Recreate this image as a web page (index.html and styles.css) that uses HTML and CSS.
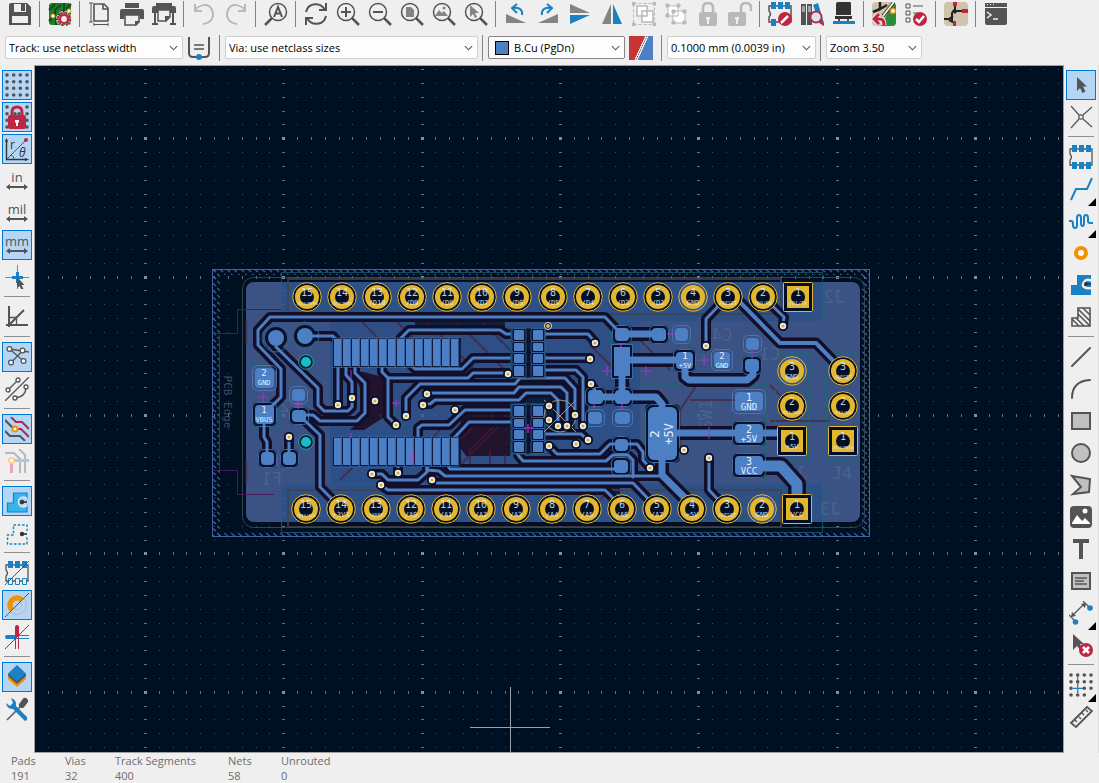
FILE: index.html
```html
<!DOCTYPE html>
<html lang="en">
<head>
<meta charset="utf-8">
<title>PCB Editor</title>
<link rel="stylesheet" href="styles.css">
</head>
<body>
<div class="app">
<header class="top">
<div class="bar" role="toolbar" aria-label="Main">
<button aria-label="Save"><svg viewBox="0 0 24 24"><path fill="#545454" d="M3 1h16l4 4v18H1V3q0-2 2-2z"/><path fill="#efefef" d="M6 2h12v8H6zM4 14h16v7H4z"/><path fill="#545454" d="M13 2h4v7h-4z"/></svg></button>
<i class="sep"></i>
<button aria-label="Board setup"><svg viewBox="0 0 24 24"><rect x="1" y="1" width="22" height="22" rx="3" fill="#1f7a2c"/><path fill="none" stroke="#0c4d18" stroke-width="2" d="M1 8l6-6M1 19l6-6V8l6-5M8 23v-7l8-8V1M18 7l5-5"/><circle cx="5" cy="14" r="2" fill="#fff" stroke="#f39200"/><circle cx="21" cy="9" r="2" fill="#fff" stroke="#f39200"/><circle cx="16" cy="17" r="6" fill="none" stroke="#efefef" stroke-width="4" stroke-dasharray="3.2 1.5"/><circle cx="16" cy="17" r="6" fill="none" stroke="#bf2641" stroke-width="2.6" stroke-dasharray="2.7 2"/><circle cx="16" cy="17" r="4" fill="#efefef" stroke="#bf2641" stroke-width="2.2"/></svg></button>
<i class="sep"></i>
<button aria-label="Page settings"><svg viewBox="0 0 24 24" fill="none" stroke="#545454"><path stroke-width="1.6" d="M6 2h10l4 4v13H6zM15 2v5h5"/><path d="M1 1h4M3 1v19M1 20h4M6 21v3M20 21v3M6 22.500h14"/></svg></button>
<button aria-label="Print"><svg viewBox="0 0 24 24"><path fill="#545454" d="M5 1h14v5H5zM2 7h20q2 0 2 2v8h-4v-3H4v3H0V9q0-2 2-2z"/><path fill="#efefef" stroke="#545454" stroke-width="1.600" d="M5 13h14v7l-3 3H5z"/><path fill="#545454" d="M15 19h5l-5 5z"/></svg></button>
<button aria-label="Plot"><svg viewBox="0 0 24 24"><path fill="#545454" d="M4 1h16v3H4zM2 4h20q2 0 2 2v5H0V6q0-2 2-2zM2 11h2v12H2zM20 11h2v12h-2zM0 21h6v2H0zM18 21h6v2h-6z"/><path fill="#efefef" stroke="#545454" stroke-width="1.500" d="M6 8h12v7l-4 4H6z"/><path fill="#545454" d="M13 14h5l-5 6z"/></svg></button>
<i class="sep"></i>
<button aria-label="Undo" disabled><svg viewBox="0 0 24 24" fill="none" stroke="#b9b9b9" stroke-width="2"><path d="M3 2v7h7M3 8C8 2 17 1 20 8c3 7-1 13-9 14"/></svg></button>
<button aria-label="Redo" disabled><svg viewBox="0 0 24 24" fill="none" stroke="#b9b9b9" stroke-width="2"><path d="M21 2v7h-7M21 8C16 2 7 1 4 8c-3 7 1 13 9 14"/></svg></button>
<i class="sep"></i>
<button aria-label="Find"><svg viewBox="0 0 24 24" fill="none" stroke="#545454"><circle cx="14" cy="10" r="8.500" stroke-width="1.500"/><path stroke-width="2.500" d="M8 16l-7 7"/><path stroke-width="2" d="M10 15l4-10 4 10M11.500 11.500h5"/></svg></button>
<i class="sep"></i>
<button aria-label="Refresh"><svg viewBox="0 0 24 24" fill="none" stroke="#545454" stroke-width="2"><path d="M2 10C4 1 16-1 21 8M22 1v7h-7M22 14c-2 9-14 11-19 2M2 23v-7h7"/></svg></button>
<button aria-label="Zoom in"><svg viewBox="0 0 24 24" fill="none" stroke="#545454"><circle cx="10" cy="10" r="8.500" stroke-width="1.500"/><path stroke-width="2.500" d="M16 16l7 7"/><path stroke-width="2" d="M5 10h10M10 5v10"/></svg></button>
<button aria-label="Zoom out"><svg viewBox="0 0 24 24" fill="none" stroke="#545454"><circle cx="10" cy="10" r="8.500" stroke-width="1.500"/><path stroke-width="2.500" d="M16 16l7 7"/><path stroke-width="2" d="M5 10h10"/></svg></button>
<button aria-label="Zoom to page"><svg viewBox="0 0 24 24" fill="none" stroke="#545454"><circle cx="10" cy="10" r="8.500" stroke-width="1.500"/><path stroke-width="2.500" d="M16 16l7 7"/><path fill="#848484" stroke="none" d="M6 5h5l3 3v7H6z"/></svg></button>
<button aria-label="Zoom to objects"><svg viewBox="0 0 24 24" fill="none" stroke="#545454"><circle cx="10" cy="10" r="8.500" stroke-width="1.500"/><path stroke-width="2.500" d="M16 16l7 7"/><path fill="#848484" stroke="none" d="M3 14l4-6 3 3 2-2 4 5z"/><circle cx="12" cy="6" r="1.500" fill="#848484" stroke="none"/></svg></button>
<button aria-label="Zoom to selection"><svg viewBox="0 0 24 24" fill="none" stroke="#545454"><circle cx="10" cy="10" r="8.500" stroke-width="1.500"/><path stroke-width="2.500" d="M16 16l7 7"/><path fill="#848484" stroke="none" d="M6 3v12l3-3 2 4 2-1-2-4h4z"/></svg></button>
<i class="sep"></i>
<button aria-label="Rotate counterclockwise"><svg viewBox="0 0 24 24"><path fill="#848484" d="M2 12v9h20z"/><path fill="none" stroke="#1a81c4" stroke-width="2" d="M18 13c1-6-4-8-9-7M13 2L8 6l5 5"/></svg></button>
<button aria-label="Rotate clockwise"><svg viewBox="0 0 24 24"><path fill="#848484" d="M22 12v9H2z"/><path fill="none" stroke="#1a81c4" stroke-width="2" d="M6 13c-1-6 4-8 9-7M11 2l5 4-5 5"/></svg></button>
<button aria-label="Mirror vertically"><svg viewBox="0 0 24 24"><path fill="#848484" d="M2 2l20 9H2z"/><path fill="#1a81c4" d="M2 13h20L2 22z"/></svg></button>
<button aria-label="Mirror horizontally"><svg viewBox="0 0 24 24"><path fill="#848484" d="M11 2v20H2z"/><path fill="#1a81c4" d="M13 2v20h9z"/></svg></button>
<button aria-label="Group" disabled><svg viewBox="0 0 24 24" fill="none" stroke="#b9b9b9"><rect x="1.500" y="1.500" width="21" height="21" stroke-dasharray="3 2"/><path fill="#b9b9b9" d="M0 0h3v3H0zM21 0h3v3h-3zM0 21h3v3H0zM21 21h3v3h-3z"/><path fill="#fff" stroke-width="1.500" d="M5 4h10v10H5zM10 9h11v11H10z"/></svg></button>
<button aria-label="Ungroup" disabled><svg viewBox="0 0 24 24" fill="none" stroke="#b9b9b9"><path fill="#fff" d="M4 4h10v10H4zM9 9h12v12H9z"/><path fill="#b9b9b9" d="M2 2h3v3H2zM13 2h3v3h-3zM2 12h3v3H2zM8 8h3v3H8zM19 8h3v3h-3zM8 19h3v3H8zM19 19h3v3h-3z"/></svg></button>
<button aria-label="Lock" disabled><svg viewBox="0 0 24 24"><path fill="none" stroke="#b9b9b9" stroke-width="2.500" d="M7 11V6q0-5 5-5t5 5v5"/><rect x="3" y="10" width="18" height="14" rx="2" fill="#b9b9b9"/><path fill="#efefef" d="M10 15h4v2l-1 1v4h-2v-4l-1-1z"/></svg></button>
<button aria-label="Unlock" disabled><svg viewBox="0 0 24 24"><path fill="none" stroke="#b9b9b9" stroke-width="2.500" d="M13 11V6q0-5 5-5t5 5v3"/><rect x="0" y="10" width="18" height="14" rx="2" fill="#b9b9b9"/><path fill="#efefef" d="M7 15h4v2l-1 1v4H8v-4l-1-1z"/></svg></button>
<i class="sep"></i>
<button aria-label="Footprint editor"><svg viewBox="0 0 24 24"><path fill="none" stroke="#545454" stroke-width="1.500" d="M1 4h22v16H1v-5q3-3 0-6z"/><path fill="#1a81c4" d="M3 0h5v7H3zM10 0h5v7h-5zM17 0h5v7h-5zM3 17h5v7H3z"/><circle cx="17" cy="17" r="7" fill="#bf2641"/><path stroke="#fff" stroke-width="2.500" d="M13 21l7-7"/></svg></button>
<button aria-label="Footprint library browser"><svg viewBox="0 0 24 24"><path fill="#545454" d="M1 2h5v21H1zM7 2h5v21H7z"/><path stroke="#efefef" d="M2 5h3M2 7h3M2 9h3M8 5h3M8 7h3M8 9h3"/><path fill="#1a81c4" d="M13 3l5-2 6 20-4 1z"/><circle cx="16" cy="15" r="5.500" fill="#d9e6f2" stroke="#bf2641" stroke-width="1.800"/><path stroke="#bf2641" stroke-width="2.600" d="M20 19l4 4"/></svg></button>
<button aria-label="3D viewer"><svg viewBox="0 0 24 24"><path fill="#333" d="M6 0h12q1 0 1 2v11H4V2q0-2 2-2zM3 14h17v3H3z"/><path fill="#545454" d="M6 17h2v3H6zM15 17h2v3h-2z"/><path fill="#1a81c4" d="M1 19h22v3H1z"/></svg></button>
<i class="sep"></i>
<button aria-label="Update PCB from schematic"><svg viewBox="0 0 24 24"><rect width="24" height="24" rx="4" fill="#d0c4aa"/><path fill="#2f8a38" d="M21 0L9 24h11q4 0 4-4V3z"/><path fill="none" stroke="#222" stroke-width="2.500" d="M8 0v7l7-4M8 7L1 10"/><path stroke="#222" stroke-width="3.500" d="M22 0L11 14"/><path stroke="#efefef" stroke-width="2" d="M22 0L11 14"/><path fill="none" stroke="#efefef" stroke-width="5" d="M2 17h6q4 0 4 6M7 12l-5 5 5 5"/><path fill="none" stroke="#bf2641" stroke-width="3" d="M2 17h6q4 0 4 6M7 12l-5 5 5 5"/><circle cx="21" cy="9" r="2.500" fill="#fff" stroke="#f39200" stroke-width="1.500"/></svg></button>
<button aria-label="Design rules checker"><svg viewBox="0 0 24 24" fill="none" stroke="#545454"><path d="M2 2h4v4H2zM2 9h4v4H2zM2 16h4v4H2zM9 4h10M9 11h5"/><circle cx="16" cy="17" r="7" fill="#bf2641" stroke="none"/><path stroke="#fff" stroke-width="2.500" d="M12 17l3 3 5-6"/></svg></button>
<i class="sep"></i>
<button aria-label="Schematic editor"><svg viewBox="0 0 24 24"><rect width="24" height="24" rx="4" fill="#d0c4aa"/><path fill="none" stroke="#222" stroke-width="2" d="M11 2v5l-3 4v8M0 17h5l4-3M11 9h9M5 18l6 3"/><path fill="#222" d="M8 9l3-2 3 2-3 3z"/><path fill="#bf2641" d="M9 0h4v4H9zM18 7h6v4h-6zM9 19h3v5H9z"/></svg></button>
<i class="sep"></i>
<button aria-label="Scripting console"><svg viewBox="0 0 24 24"><path fill="#545454" d="M1 1h22v4H1zM1 6h22v15q0 2-2 2H3q-2 0-2-2z"/><path fill="#efefef" d="M3 2h1v1H3zM6 2h1v1H6zM9 2h1v1H9z"/><path fill="none" stroke="#efefef" stroke-width="1.500" d="M3 10l4 3-4 3M9 17h5"/></svg></button>
</div>
<div class="bar bar2" role="toolbar" aria-label="Tracks and layers">
<span class="combo w-track"><select aria-label="Track width"><option>Track: use netclass width</option></select><svg class="chev" viewBox="0 0 10 6"><path d="M1 1l4 4 4-4"/></svg></span>
<button class="auto" aria-label="Automatic track width"><svg viewBox="0 0 24 24" fill="none" stroke="#545454"><path stroke-width="2" d="M2 1v16q0 4 4 4h12q4 0 4-4V1"/><path stroke-width="1.300" d="M7 9h10M7 13h10"/><circle cx="12" cy="21" r="3" fill="#1a81c4" stroke="none"/></svg></button>
<i class="sep"></i>
<span class="combo w-via"><select aria-label="Via size"><option>Via: use netclass sizes</option></select><svg class="chev" viewBox="0 0 10 6"><path d="M1 1l4 4 4-4"/></svg></span>
<i class="sep"></i>
<span class="combo layer"><i class="swatch"></i><select aria-label="Active layer"><option>B.Cu (PgDn)</option></select><svg class="chev" viewBox="0 0 10 6"><path d="M1 1l4 4 4-4"/></svg></span>
<button class="pair" aria-label="Layer pair"><svg viewBox="0 0 24 24"><path fill="#c83434" d="M0 0h18L7 24H0z"/><path fill="#4d7fc4" d="M18 0h6v24H7z"/><path stroke="#fff" stroke-width="3" d="M18 0L7 24"/><path stroke="#222" stroke-dasharray="1 1" d="M18 0L7 24"/></svg></button>
<i class="sep"></i>
<span class="combo w-grid"><select aria-label="Grid"><option>0.1000 mm (0.0039 in)</option></select><svg class="chev" viewBox="0 0 10 6"><path d="M1 1l4 4 4-4"/></svg></span>
<i class="sep"></i>
<span class="combo w-zoom"><select aria-label="Zoom"><option>Zoom 3.50</option></select><svg class="chev" viewBox="0 0 10 6"><path d="M1 1l4 4 4-4"/></svg></span>
</div>
</header>
<nav class="side left" role="toolbar" aria-label="Display options">
<button class="on" aria-label="Show grid"><svg viewBox="0 0 24 24"><g class="dots"><path d="M2 2h.01M8.700 2h.01M15.300 2h.01M22 2h.01M2 8.700h.01M8.700 8.700h.01M15.300 8.700h.01M22 8.700h.01M2 15.300h.01M8.700 15.300h.01M15.300 15.300h.01M22 15.300h.01M2 22h.01M8.700 22h.01M15.300 22h.01M22 22h.01"/></g></svg></button>
<button class="on" aria-label="Grid overrides"><svg viewBox="0 0 24 24"><g class="dots"><path d="M2 2h.01M22 2h.01M2 8.700h.01M22 8.700h.01M2 15.300h.01M22 15.300h.01M2 22h.01M22 22h.01M10 8.700h.01M14 8.700h.01"/></g><path fill="none" stroke="#bf2641" stroke-width="3" d="M7 11V7q0-5 5-5t5 5v4"/><rect x="3" y="10" width="18" height="14" rx="2" fill="#bf2641"/><path fill="#fff" d="M10 15h4v2l-1 1v3h-2v-3l-1-1z"/></svg></button>
<button class="on" aria-label="Polar coordinates"><svg viewBox="0 0 24 24" fill="none" stroke="#333"><path stroke-width="1.400" d="M1.500 2v20.500H22"/><path fill="#333" d="M0 5l1.500-4L3 5zM20 21l4 1.500-4 1.500z" stroke="none"/><path stroke="#545454" d="M2 22L21 3M6 18q3 1 3 4"/><circle cx="21" cy="3" r="2" fill="#bf2641" stroke="none"/><text class="polar" x="5" y="12">r</text><text class="polar it" x="14" y="20">θ</text></svg></button>
<button class="unit" aria-label="Inches"><span>in</span><svg viewBox="0 0 22 6"><path d="M0 3l4-3v2h14V0l4 3-4 3V4H4v2z"/></svg></button>
<button class="unit" aria-label="Mils"><span>mil</span><svg viewBox="0 0 22 6"><path d="M0 3l4-3v2h14V0l4 3-4 3V4H4v2z"/></svg></button>
<button class="unit on" aria-label="Millimeters"><span>mm</span><svg viewBox="0 0 22 6"><path d="M0 3l4-3v2h14V0l4 3-4 3V4H4v2z"/></svg></button>
<button aria-label="Full-window crosshairs"><svg viewBox="0 0 24 24"><path stroke="#848484" d="M0 12.500h24M12.500 0v24"/><path stroke="#1a81c4" stroke-width="3" d="M7 12.500h11M12.500 7v11"/><path fill="#545454" d="M12 12v11l2.500-2 2 4 2-1-2-4h3z"/></svg></button>
<i class="sep"></i>
<button aria-label="Limit to 45 degrees"><svg viewBox="0 0 24 24" fill="none" stroke="#545454" stroke-width="2"><path d="M4 1v21M1 20h22M4 20L19 5"/><path stroke-width="1.300" d="M4 12.500h7.500V20"/></svg></button>
<i class="sep"></i>
<button class="on" aria-label="Show ratsnest"><svg viewBox="0 0 24 24" fill="#fff" stroke="#545454" stroke-width="1.300"><path fill="none" d="M4.500 4l14 12M18 5.500L6 17.500M4.500 4L24 7"/><circle cx="4.500" cy="4" r="2.400"/><circle cx="17.500" cy="5.500" r="2.400"/><circle cx="6" cy="17.500" r="2.400"/><circle cx="18.500" cy="16" r="2.400"/></svg></button>
<button aria-label="Curved ratsnest"><svg viewBox="0 0 24 24" fill="#fff" stroke="#545454" stroke-width="1.300"><path fill="none" d="M0 24L24 0M3 13L13 3M10 21Q21 20 21 10"/><circle cx="3" cy="13" r="2"/><circle cx="13" cy="3" r="2"/><circle cx="10" cy="21" r="2"/><circle cx="21" cy="10" r="2"/></svg></button>
<i class="sep"></i>
<button class="on" aria-label="Dim inactive layers"><svg viewBox="0 0 24 24" fill="none" stroke-width="2"><path stroke="#545454" d="M0 3l9 9M0 14l5 5h10l5 5"/><path stroke="#bf2641" d="M6 0l5 5h6l7 7M10 12h6l8 8"/><circle cx="10" cy="12" r="2.500" fill="#fff" stroke="#f39200"/></svg></button>
<button aria-label="Net color mode"><svg viewBox="0 0 24 24" fill="none" stroke="#b9b9b9" stroke-width="2"><path d="M0 4h9l6 6v14M14 0l6 6v18"/><path stroke="#a3cbe6" stroke-width="3" d="M6 11.500h18"/><path stroke="#e8a6b3" stroke-width="3" d="M6.500 12v12"/><circle cx="6.500" cy="11.500" r="2.500" fill="#fff" stroke="#fbd090"/></svg></button>
<i class="sep"></i>
<button class="on" aria-label="Show filled zones"><svg viewBox="0 0 24 24"><path fill="#37b4ec" stroke="#1a81c4" stroke-width="1.200" d="M8.500 4H22v5a5 5 0 1 0 0 8v6H2.500V14h6z"/><path fill="none" stroke="#e4f2fb" stroke-width="1.500" d="M22 9.500a5 5 0 1 0 0 7"/><circle cx="17" cy="13" r="2.200" fill="#333"/><path stroke="#333" stroke-width="1.600" d="M17 13h5"/></svg></button>
<button aria-label="Show zone outlines"><svg viewBox="0 0 24 24"><path fill="none" stroke="#1a81c4" stroke-width="1.400" stroke-dasharray="2.500 1.800" d="M8.500 4H22v19H2.500V14h6z"/><path stroke="#efefef" stroke-width="4" d="M22 10v6"/><circle cx="17" cy="13" r="2.200" fill="#333"/><path stroke="#333" stroke-width="1.600" d="M17 13h5"/></svg></button>
<i class="sep"></i>
<button aria-label="Sketch pads"><svg viewBox="0 0 24 24"><path fill="none" stroke="#545454" stroke-width="1.300" d="M1 4h22v16H1v-5q3-3 0-6z"/><path fill="#1a81c4" d="M3 0h5v7H3zM10 0h5v7h-5zM17 0h5v7h-5z"/><path fill="#efefef" stroke="#1a81c4" d="M3.500 17.500h4v6h-4zM10.500 17.500h4v6h-4zM17.500 17.500h4v6h-4z"/><path stroke="#545454" d="M0 24L24 0"/></svg></button>
<button class="on" aria-label="Sketch vias"><svg viewBox="0 0 24 24" fill="none"><circle cx="12" cy="12" r="9.500" stroke="#b9b9b9"/><circle cx="12" cy="12" r="4.500" stroke="#b9b9b9"/><path stroke="#f39200" stroke-width="5" d="M7 17A7 7 0 1 1 17 7"/><path stroke="#545454" d="M0 24L24 0"/></svg></button>
<button aria-label="Sketch tracks"><svg viewBox="0 0 24 24"><path fill="#1a81c4" d="M2 10h10v4H2q-2 0-2-2t2-2zM12 10h12v1H12zM12 13h12v1H12z"/><path fill="#bf2641" d="M10 2q0-2 2-2t2 2v10h-4zM10 12h1v12h-1zM13 12h1v12h-1z"/><path stroke="#545454" d="M0 24L24 0"/></svg></button>
<i class="sep"></i>
<button class="on" aria-label="Appearance panel"><svg viewBox="0 0 24 24"><path fill="#f39200" d="M3 14l9 8 9-8v-2H3z"/><path fill="#545454" d="M3 11l9 8 9-8v-2H3z"/><path fill="#1a81c4" d="M12 0l9 8.500-9 8-9-8z"/></svg></button>
<button aria-label="Preferences"><svg viewBox="0 0 24 24"><path stroke="#545454" stroke-width="1.500" d="M2 23L15 10"/><path stroke="#545454" stroke-width="6" stroke-linecap="round" d="M17 8l3-4"/><path fill="#1a81c4" d="M6 1q6 2 5 8l11 11q1 3-2 4L8 12q-6 0-7-6l4 3 3-3z"/></svg></button>
</nav>
<main class="canvas">
<svg id="board" viewBox="35 66 1028 686" preserveAspectRatio="xMidYMid slice" role="img" aria-label="Board layout">
<defs><pattern id="hatch" width="7" height="7" patternUnits="userSpaceOnUse"><path d="M0 1l6 5" stroke="#3c5f9c" stroke-width="1.200"/></pattern></defs>
</svg>
</main>
<nav class="side right" role="toolbar" aria-label="Drawing tools">
<button class="on" aria-label="Select"><svg viewBox="0 0 24 24"><path fill="#545454" d="M8 4v14l3-3 2.500 5 3-1.500-2.500-5h4z"/></svg></button>
<button aria-label="Local ratsnest"><svg viewBox="0 0 24 24" fill="none" stroke="#545454" stroke-width="1.200"><path d="M2 1l8 9M23 2l-9 8M2 23l8-9M23 22l-9-8"/><circle cx="12" cy="12" r="2.200"/></svg></button>
<i class="sep"></i>
<button aria-label="Place footprint"><svg viewBox="0 0 24 24"><path fill="none" stroke="#545454" stroke-width="1.300" d="M1 4h22v16H1v-5q3-3 0-6z"/><path fill="#1a81c4" d="M3 0h5v7H3zM10 0h5v7h-5zM17 0h5v7h-5zM3 17h5v7H3zM10 17h5v7h-5zM17 17h5v7h-5z"/></svg></button>
<button class="more" aria-label="Route tracks"><svg viewBox="0 0 24 24"><path fill="none" stroke="#1a81c4" stroke-width="2" d="M2 23l5-11h11l5-11"/></svg></button>
<button class="more" aria-label="Tune length"><svg viewBox="0 0 24 24"><path fill="none" stroke="#1a81c4" stroke-width="2" d="M0 12h2q2 0 2 3v1q0 3 2 3t2-3V9q0-3 2-3t2 3v5q0 3 1.500 3t1.500-3V9q0-3 2-3t2 3v3q0 2 2 2h3"/></svg></button>
<button aria-label="Add via"><svg viewBox="0 0 24 24"><circle cx="12" cy="12" r="5" fill="#fff" stroke="#f39200" stroke-width="4"/></svg></button>
<button aria-label="Add zone"><svg viewBox="0 0 24 24"><path fill="#1a81c4" d="M8 2h14v20H2V12h6z"/><path fill="none" stroke="#efefef" stroke-width="2.500" d="M22 7.500q-5-2-7 1.500t0 5q3 2 7 1"/><circle cx="17" cy="11" r="2" fill="#333"/><path stroke="#333" stroke-width="1.600" d="M17 11h5"/></svg></button>
<button aria-label="Add rule area"><svg viewBox="0 0 24 24" fill="none" stroke="#545454" stroke-width="1.600"><path d="M9 3h12v18H3V13h6z"/><path d="M3 14l7 7M7 13l8 8M9 9l12 12M9 4l12 12M14 3l7 7"/></svg></button>
<i class="sep"></i>
<button aria-label="Draw line"><svg viewBox="0 0 24 24"><path stroke="#545454" stroke-width="2" stroke-linecap="round" d="M3 21L21 3"/></svg></button>
<button aria-label="Draw arc"><svg viewBox="0 0 24 24"><path fill="none" stroke="#545454" stroke-width="2" stroke-linecap="round" d="M3 21Q3 4 21 3"/></svg></button>
<button aria-label="Draw rectangle"><svg viewBox="0 0 24 24"><rect x="3" y="4" width="18" height="16" fill="#c0c0c0" stroke="#545454" stroke-width="2"/></svg></button>
<button aria-label="Draw circle"><svg viewBox="0 0 24 24"><circle cx="12" cy="12" r="9" fill="#c0c0c0" stroke="#545454" stroke-width="2"/></svg></button>
<button aria-label="Draw polygon"><svg viewBox="0 0 24 24"><path fill="#c0c0c0" stroke="#545454" stroke-width="2" d="M3 3l18 3-1 13-16 2 8-7z"/></svg></button>
<button aria-label="Place image"><svg viewBox="0 0 24 24"><rect x="1" y="1" width="22" height="22" rx="4" fill="#545454"/><path fill="#fff" d="M3 18l5-8 5 6 3-3 5 5v1H3z"/><circle cx="16" cy="6" r="2.500" fill="#fff"/></svg></button>
<button aria-label="Place text"><svg viewBox="0 0 24 24"><path fill="#545454" d="M4 2h16v4h-6v16h-4V6H4z"/></svg></button>
<button aria-label="Place text box"><svg viewBox="0 0 24 24"><rect x="3" y="4" width="18" height="16" fill="#c0c0c0" stroke="#545454" stroke-width="2"/><path stroke="#545454" stroke-width="1.300" d="M6 9h12M6 12h9M6 15h12"/></svg></button>
<button class="more" aria-label="Add dimension"><svg viewBox="0 0 24 24"><path fill="none" stroke="#545454" stroke-width="1.200" d="M0 14l7 7M14 0l7 7M3 15L16 2"/><path fill="#545454" d="M2 16l1-5 4 4zM17 2l-5 1 4 4z"/><circle cx="21" cy="7" r="2.800" fill="#1a81c4"/><circle cx="6.500" cy="21" r="2.800" fill="#1a81c4"/></svg></button>
<button aria-label="Delete"><svg viewBox="0 0 24 24"><path fill="#545454" d="M4 1v16l4-4 4 5 2-1-3-6h4z"/><circle cx="17" cy="17" r="7" fill="#bf2641"/><path stroke="#fff" stroke-width="2.500" d="M14 14l6 6M20 14l-6 6"/></svg></button>
<i class="sep"></i>
<button class="more" aria-label="Grid origin"><svg viewBox="0 0 24 24"><path stroke="#1a81c4" stroke-width="1.300" d="M4 15.300h10M8.700 9v11"/><path stroke="#545454" d="M8.700 3v6"/><g class="dots"><path d="M2 2h.01M8.700 2h.01M15.300 2h.01M22 2h.01M2 8.700h.01M8.700 8.700h.01M15.300 8.700h.01M22 8.700h.01M2 15.300h.01M15.300 15.300h.01M22 15.300h.01M2 22h.01M8.700 22h.01M15.300 22h.01"/></g></svg></button>
<button aria-label="Measure"><svg viewBox="0 0 24 24" fill="none" stroke="#545454" stroke-width="1.800"><path d="M2 18L18 2l5 4L7 22z"/><path stroke-width="1.400" d="M6 15l2 2M10 12l2 2M13 8l2 2M17 5l2 2"/></svg></button>
</nav>
<footer class="status">
<dl><div><dt>Pads</dt><dd>191</dd></div><div><dt>Vias</dt><dd>32</dd></div><div><dt>Track Segments</dt><dd>400</dd></div><div><dt>Nets</dt><dd>58</dd></div><div><dt>Unrouted</dt><dd>0</dd></div></dl>
</footer>
</div>
<script src="board.js"></script>
</body>
</html>
```
FILE: styles.css
```css
* { box-sizing: border-box; }
html, body { height: 100%; }
body { margin: 0; background: #efefef; font-family: "Open Sans", "Noto Sans", sans-serif; font-size: 11px; color: #000; overflow: hidden; }
.app { height: 100vh; display: grid; grid-template: 65px 1fr 30px / 34px 1fr 35px; }
.top { grid-column: 1 / -1; }
.bar { display: flex; align-items: center; height: 28px; padding-left: 4px; }
.bar2 { height: 37px; padding: 2px 0 0 5px; }
button { border: 0; padding: 0; margin: 0; background: none; display: flex; align-items: center; justify-content: center; flex: none; }
.bar button { width: 32px; height: 28px; }
button svg { width: 24px; height: 24px; display: block; }
.sep { flex: none; display: block; }
.bar .sep { width: 8px; height: 26px; background: linear-gradient(#848484, #848484) 3px 0 / 1px 100% no-repeat; }
.bar2 .sep { width: 10px; background-position: 4px 0; }
.combo { position: relative; display: flex; align-items: center; height: 23px; background: #fdfdfd; border: 1px solid #cfcfcf; border-radius: 2px; flex: none; }
.combo select { appearance: none; border: 0; background: none; width: 100%; height: 100%; padding: 0 20px 0 3px; font: 11px "Open Sans", "Noto Sans", sans-serif; color: #000; }
.chev { position: absolute; right: 4px; width: 9px; height: 6px; fill: none; stroke: #555; stroke-width: 1.2; pointer-events: none; }
.w-track { width: 178px; }
.w-via { width: 253px; }
.layer { width: 137px; border-color: #858585; padding-left: 6px; }
.swatch { width: 14px; height: 14px; border: 1px solid #000; background: #4d7fc4; flex: none; margin-right: 2px; }
.w-grid { width: 149px; }
.w-zoom { width: 96px; }
.side { display: flex; flex-direction: column; align-items: center; padding-top: 5px; gap: 2px; }
.side button { width: 30px; height: 30px; position: relative; border: 1px solid transparent; }
.side .on { background: #b4d6f4; border-color: #0078d7; }
.side .sep { width: 26px; height: 6px; background: linear-gradient(#909090, #909090) 0 2px / 100% 1px no-repeat; }
.right { border-right: 1px solid #dcdcdc; }
.side button.more::after { content: ""; position: absolute; right: -1px; bottom: -3px; border: 4px solid #000; border-top-color: transparent; border-left-color: transparent; }
.side .unit { flex-direction: column; padding-bottom: 3px; }
.unit span { font: 13px/14px "Open Sans", sans-serif; color: #545454; }
.unit svg { width: 22px; height: 6px; fill: #545454; }
.dots { fill: none; stroke: #545454; stroke-width: 3.6; stroke-linecap: round; }
.polar { font: 12px "Open Sans", sans-serif; fill: #333; stroke: none; }
.it { font-style: italic; }
.canvas { background: #001023; border: 1px solid #a0a0a0; min-width: 0; min-height: 0; overflow: hidden; }
.canvas svg { display: block; width: 100%; height: 100%; }
.status { grid-column: 1 / -1; color: #6d6d6d; }
.status dl { margin: 0; padding-left: 11px; display: grid; grid-template-columns: 54px 50px 113px 53px auto; line-height: 15px; }
.status dt, .status dd { margin: 0; }
.pn { font-family: "DejaVu Sans Mono", monospace; fill: #e8eef8; text-anchor: middle; dominant-baseline: central; }
.silk { font: 17px "DejaVu Sans Mono", monospace; fill: #7088a8; fill-opacity: .3; text-anchor: middle; dominant-baseline: central; }
.edge { font-size: 11px; fill-opacity: .5; }
```
FILE: board.js
```js
const svg = document.getElementById('board');
const out = [];
const add = s => out.push(s);
const rect = (x1, y1, x2, y2, a) => `<rect x="${x1}" y="${y1}" width="${x2 - x1}" height="${y2 - y1}" ${a}/>`;
const label = (x, y, s, size, a = '') => `<text class="pn" x="${x}" y="${y}" font-size="${size}" ${a}>${s}</text>`;

// Grid: a minor dot every tenth of a major step
function grid(opacity) {
  let dots = '', ticks = '', major = '';
  for (let i = -8; i < 68; i++) for (let j = -6; j < 46; j++) {
    const x = Math.round(145 + i * 13.83), y = Math.round(138.2 + j * 13.84);
    if (x < 35 || x > 1062 || y < 66 || y > 751) continue;
    if (i % 10 === 0 && j % 10 === 0) major += `M${x - 1} ${y - 1}h3v3h-3z`;
    else if (i % 10 === 0) ticks += `M${x - 1} ${y}h3v1h-3z`;
    else if (j % 10 === 0) ticks += `M${x} ${y - 1}h1v3h-1z`;
    else dots += `M${x} ${y}h1v1h-1z`;
  }
  add(`<g opacity="${opacity}"><path fill="#46515d" d="${dots}"/><path fill="#6c7278" d="${ticks}"/><path fill="#8c8c8c" d="${major}"/></g>`);
}

// Copper tracks: [width, points]
const tracks = [
  [3, '265 412 273 405 281 397 281 369 258 345 258 330 270 317 605 317 621 334'],
  [3, '276 338 276 347 318 388 318 405 324 411 348 411 352 407 352 382 346 375 346 362'],
  [3, '305 336 333 336 338 342 338 405'],
  [3, '355 362 355 373 365 383 365 413 357 421 320 421 313 415 298 415'],
  [3, '302 418 320 435 320 487 338 505'],
  [3, '264 425 264 437 267 442 267 458'], [3, '289 437 289 458'],
  [3, '382 362 382 372 388 378 388 417 396 425'],
  [3, '388 378 468 378 473 373 508 373'],
  [3, '400 339 409 330 500 330 506 334 518 334'],
  [3, '410 364 415 369 462 369 473 358 515 358'],
  [3, '406 416 406 398 420 384 515 384 520 378 565 378 575 389 575 415'],
  [3, '427 393 514 393 519 387 561 387 567 393 567 426'],
  [3, '423 404 430 404 435 400 519 400 526 393 551 393 558 400 558 426'],
  [3, '418 440 418 428 422 425 449 425 465 410 515 410'],
  [3, '454 440 454 438 469 422 515 422'],
  [3, '537 334 588 334 595 342'], [3, '537 358 590 358'],
  [3, '537 370 576 370 583 377 583 425'],
  [3, '537 434 581 434 588 440'],
  [3, '549 446 557 454 600 454 610 444 637 444 643 452 643 460 650 468'],
  [3, '518 449 518 455 523 461 606 461 613 455 628 455 633 460 633 477'],
  [3, '445 462 450 469 617 469'],
  [3, '427 462 427 470 439 471 445 476 662 476'],
  [3, '427 462 427 472 418 480 388 480 382 474 372 474'],
  [3, '381 485 388 490 605 490 620 505'],
  [3, '432 480 437 483 633 483 657 508'],
  [3, '398 462 398 473'], [3, '591 384 596 392'],
  [7, '622 334 658 334'], [7, '622 360 684 360'], [7, '622 360 622 397'],
  [7, '595 397 656 397 662 404 662 430'],
  [7, '685 362 685 377 689 380 747 380 753 375 753 366'],
  [7, '662 433 790 433'], [7, '662 455 662 475 692 505'],
  [11, '750 466 781 466 797 484 797 509'],
  [3, '727 297 706 319 706 346'], [4, '738 300 780 343 816 343 843 371'],
  [3, '763 297 784 317 783 326'], [3, '709 458 709 490 727 509']
];

// Surface-mount pads: [x1, y1, x2, y2, isolated, corner radius]
const pads = [
  [255, 368, 274, 388, 0], [255, 405, 274, 424, 1], [292, 389, 305, 401, 0], [292, 410, 306, 422, 1],
  [261, 452, 274, 465, 1], [283, 452, 296, 465, 1],
  [615, 328, 629, 341, 1], [614, 347, 630, 376, 1, 0], [588, 390, 603, 404, 1], [615, 390, 630, 404, 1],
  [588, 412, 602, 424, 0], [615, 412, 630, 424, 0], [615, 439, 628, 451, 1], [614, 460, 628, 473, 1],
  [652, 328, 666, 341, 1], [675, 328, 688, 341, 0], [676, 352, 693, 369, 1], [714, 352, 730, 368, 0],
  [745, 359, 759, 372, 1], [746, 338, 759, 350, 0], [735, 392, 763, 411, 0], [735, 424, 763, 443, 1],
  [735, 456, 763, 475, 1], [648, 407, 677, 460, 1, 6]
];

const line = (w, p, c) => `<polyline points="${p}" fill="none" stroke="${c}" stroke-width="${w}" stroke-linejoin="round" stroke-linecap="round"/>`;

grid(1);
add(rect(212.5, 269.5, 869.5, 536.5, 'fill="none" stroke="#3f63a4"'));
add(rect(213, 270, 220, 536, 'fill="url(#hatch)"') + rect(862, 270, 869, 536, 'fill="url(#hatch)"') + rect(213, 270, 869, 275, 'fill="url(#hatch)"') + rect(213, 531, 869, 536, 'fill="url(#hatch)"'));
add(rect(242.5, 277.5, 864.5, 527.5, 'rx="11" fill="none" stroke="#34434d"'));
add(rect(246, 282, 860, 522, 'rx="8" fill="#3a5384"'));
add(rect(281, 282, 823, 321, 'fill="#2d5186"') + rect(281, 483, 822, 522, 'fill="#2d5186"'));
add(rect(330, 321, 640, 483, 'fill="#2d4f85"'));
add('<path fill="#21132c" d="M356 372h8l22 6v38l-22 14h-14l16-16z"/><path fill="#21132c" d="M470 386h48v20l-8 50h-44l-8-12 4-34z"/>');
add('<path fill="#001026" d="M415 320h90v12h-90zM430 486h190v8H430zM515 380h60v60h-60z" opacity=".75"/>');
add('<path fill="#2d4f85" d="M420 406h42l-14 14h-28z"/>');
add('<path fill="none" stroke="#4a1c33" stroke-width="2" opacity=".6" d="M395 320l40 40M425 320l50 50M455 320l50 50M482 322l30 30M420 450l50-50M435 465l60-60M450 475l60-60M470 480v-30l30-30M490 490v-40M505 490v-35M362 322l25 25M340 480l40-40M590 345l40 40M640 340l30 30M700 380l-20 30v40M545 500l40-40M600 500l40-40M246 320v24M246 460v24M690 400h50M770 421h60M770 385l20 20"/>');
grid(.35);
add('<g fill="none" stroke="#1c6676" opacity=".7"><path d="M281.500 272.500h541v49h-541zM281.500 483.500h541v49h-541zM333.500 337.500h127v30h-127zM333.500 437.500h127v30h-127zM249.500 364.500h29v64h-29zM644.500 384.500h122v97h-122zM775.500 352.500h33v108h-33zM826.500 352.500h33v108h-33zM610.500 325.500h80v20h-80z"/></g>');
add('<g fill="none" stroke="#44404a" opacity=".8"><path stroke-width="2" d="M288 279h493v35H288zM288 490h493v37H288z"/></g>');
add('<path fill="none" stroke="#4a1a5a" d="M213 333.500h24.500v-24H281M213 470.500h24.500v24H274"/><path fill="none" stroke="#2b3948" d="M219.500 335v135"/>');

[['J2', 834, 297, 1], ['J3', 830, 509, 1], ['J4', 842, 473, 0], ['J5', 797, 473, 1], ['C4', 722, 335, 1], ['C1', 770, 354, 1], ['F1', 272, 479, 1], ['C2', 290, 406, 1]].forEach(([t, x, y, m]) =>
  add(`<text class="silk" transform="translate(${x} ${y})${m ? ' scale(-1 1)' : ''}">${t}</text>`));
add('<text class="silk edge" transform="translate(227 402) rotate(90)">PCB Edge</text>');
add('<text class="silk" transform="translate(706 415) rotate(-90)">SW1</text>');

// Clearance gaps come first so that the copper lies over them
tracks.forEach(([w, p]) => add(line(w + 7, p, '#130f29')));
pads.forEach(([a, b, c, d, iso]) => { if (iso) add(rect(a - 3, b - 3, c + 3, d + 3, 'rx="5" fill="#071129"')); });
[[276, 338], [305, 336]].forEach(([x, y]) => add(`<circle cx="${x}" cy="${y}" r="11" fill="#071129"/><circle cx="${x}" cy="${y}" r="14" fill="none" stroke="#2d6590"/>`));
tracks.forEach(([w, p]) => add(line(w, p, '#4d7fc4')));
pads.forEach(([a, b, c, d, iso, r = 4]) => {
  add(rect(a - 2.5, b - 2.5, c + 2.5, d + 2.5, `rx="${r + 1}" fill="none" stroke="#4d7fc4" stroke-width=".8"`));
  add(rect(a, b, c, d, `rx="${r}" fill="#4d7fc4"`));
});
[[276, 338], [305, 336]].forEach(([x, y]) => add(`<circle cx="${x}" cy="${y}" r="8" fill="#4d7fc4"/>`));

// Fine-pitch rows and resistor networks
add(rect(332, 338, 461, 367, 'fill="#101a3a"') + rect(332, 437, 461, 467, 'fill="#101a3a"'));
for (let i = 0; i < 14; i++) {
  [339, 438].forEach(y => add(rect(334 + 9 * i, y, 341 + 9 * i, y + 27, 'fill="#4d7fc4"') + rect(332.5 + 9 * i, y - 1, 341.5 + 9 * i, y + 28.5, 'fill="none" stroke="#3d6db2" stroke-width=".6"')));
}
[0, 76].forEach(o => {
  add(rect(511, 328 + o, 545, 378 + o, 'fill="#081430" stroke="#20607a"'));
  [[330, 340], [343, 351], [354, 363], [366, 376]].forEach(([a, b]) => [514, 533].forEach(x =>
    add(rect(x, a + o, x + 10, b + o, 'rx="1" fill="#4d7fc4"') + rect(x - 2, a - 1.5 + o, x + 12, b + 1.5 + o, 'rx="2" fill="none" stroke="#3d6db2" stroke-width=".7"'))));
});

add('<g fill="none" stroke="#9c978c"><circle cx="560" cy="416" r="16"/><path d="M544 400l32 32M576 400l-32 32"/></g>');
add('<g stroke="#a536c4"><path d="M641 371h10M646 366v10M602 371h9M607 366v10M699 360h10M704 355v10M258 397h10M263 392v10M298 400v9M294 405h9M392 403h8M396 399v8M667 334h8M277 458v8M752 349v10M351 370v9M351 433v5M709 427v12"/></g><g stroke="#f020f0"><path d="M524 428h9M528 424v9M621 344v3M622 404v5M594 404v4M413 452v12"/></g>');

const vias = '338 405 352 398 375 401 396 425 406 416 427 394 423 405 455 410 508 374 595 343 590 359 591 384 549 406 549 420 558 426 567 426 575 415 583 426 588 440 576 444 549 446 289 437 372 474 398 473 381 485 432 480 650 468 684 450 709 458 706 346 783 326'.split(' ').map(Number);
for (let i = 0; i < vias.length; i += 2) add(`<circle cx="${vias[i]}" cy="${vias[i + 1]}" r="5" fill="#071129"/><circle cx="${vias[i]}" cy="${vias[i + 1]}" r="3.200" fill="#ececec"/><circle cx="${vias[i]}" cy="${vias[i + 1]}" r="1.600" fill="#e3a91e"/>`);
add('<circle cx="548" cy="326" r="3.500" fill="#071129" stroke="#ececec"/><circle cx="548" cy="326" r="2" fill="#e3b62f"/>');
[362, 442].forEach(y => add(`<circle cx="306" cy="${y}" r="6" fill="#19bcc8" stroke="#06202e" stroke-width="2"/><circle cx="306" cy="${y}" r="7.300" fill="none" stroke="#19bcc8" stroke-width=".7"/>`));

// Through-hole header pins
function pin(x, y, n, net, square) {
  const open = net === 'GND';
  if (square) add(rect(x - 14.5, y - 14.5, x + 14.5, y + 14.5, 'rx="1" fill="#020f26" stroke="#e3b62f"') + rect(x - 11, y - 11, x + 11, y + 11, 'fill="#e3b62f"'));
  else add(`<circle cx="${x}" cy="${y}" r="14.300" fill="${open ? '#33558c' : '#020f26'}" stroke="#e3b62f"/><circle cx="${x}" cy="${y}" r="12" fill="#e3b62f"/>`);
  add(`<circle cx="${x}" cy="${y}" r="7" fill="#020f26"/>`);
  add(label(x, y - 5, n, 10, 'fill-opacity=".85"') + label(x, y + 6, net, net.length > 7 ? 4 : net.length > 4 ? 5 : 7, 'fill-opacity=".9"'));
}
const topX = [798, 763, 728, 693, 658, 623, 588, 553, 517, 482, 447, 412, 377, 342, 307];
const topNets = ['/D1/TX', '/D0/RX', '/RESET', 'GND', '/D2', '/D3', '/D4', '/D5', '/D6', '/D7', '/D8', '/D9', '/D10', '/D11/MOSI', '/D12/MISO'];
const lowNets = ['VCC', 'GND', '/RESET', '+5V', '/A7', '/A6', '/A5', '/A4', '/A3', '/A2', '/A1', '/A0', '/AREF', '+3V3', '/D13/SCK'];
topX.forEach((x, i) => { pin(x, 297, i + 1, topNets[i], i === 0); pin(x - 1, 509, i + 1, lowNets[i], i === 0); });
pin(792, 371, 3, 'GND'); pin(792, 406, 2, '/D11/MOSI'); pin(792, 441, 1, '+5V', true);
pin(843, 371, 3, '/RESET'); pin(843, 406, 2, '/D13/SCK'); pin(843, 441, 1, '/D12/MISO', true);

[[264, 373, 2, 'GND'], [264, 410, 1, 'VBUS'], [685, 356, 1, '+5V'], [722, 356, 2, 'GND']].forEach(([x, y, n, t]) => add(label(x, y, n, 9) + label(x, y + 10, t, 7)));
[[397, 1, 'GND'], [429, 2, '+5V'], [461, 3, 'VCC']].forEach(([y, n, t]) => add(label(749, y, n, 10) + label(749, y + 10, t, 9)));
add(label(654, 434, 2, 13, 'transform="rotate(-90 654 434)"') + label(669, 434, '+5V', 12, 'transform="rotate(-90 669 434)"'));

// Cursor
add('<path stroke="#9aa0a6" fill="none" d="M470 727.500h80M510.500 687v66"/>');
svg.insertAdjacentHTML('beforeend', out.join(''));
```
